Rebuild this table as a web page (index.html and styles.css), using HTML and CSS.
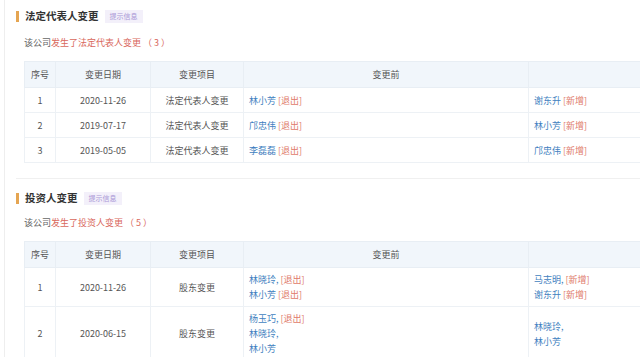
FILE: index.html
```html
<!DOCTYPE html>
<html lang="zh">
<head>
<meta charset="utf-8">
<link rel="stylesheet" href="styles.css">
</head>
<body>
<div class="page">
  <section class="section first">
    <div class="section-head">
      <span class="bar"></span>
      <h2 class="title">法定代表人变更</h2>
      <span class="badge">提示信息</span>
    </div>
    <p class="desc">该公司<span class="hl">发生了法定代表人变更<span class="cnt">（3）</span></span></p>
    <table class="tbl">
      <colgroup>
        <col class="c-no"><col class="c-date"><col class="c-item"><col class="c-before"><col class="c-after">
      </colgroup>
      <thead>
        <tr><th>序号</th><th>变更日期</th><th>变更项目</th><th>变更前</th><th class="last"></th></tr>
      </thead>
      <tbody>
        <tr><td>1</td><td>2020-11-26</td><td>法定代表人变更</td><td class="names"><span class="nm">林小芳</span> <span class="tag">[退出]</span></td><td class="names last"><span class="nm">谢东升</span> <span class="tag">[新增]</span></td></tr>
        <tr><td>2</td><td>2019-07-17</td><td>法定代表人变更</td><td class="names"><span class="nm">邝忠伟</span> <span class="tag">[退出]</span></td><td class="names last"><span class="nm">林小芳</span> <span class="tag">[新增]</span></td></tr>
        <tr><td>3</td><td>2019-05-05</td><td>法定代表人变更</td><td class="names"><span class="nm">李磊磊</span> <span class="tag">[退出]</span></td><td class="names last"><span class="nm">邝忠伟</span> <span class="tag">[新增]</span></td></tr>
      </tbody>
    </table>
  </section>
  <section class="section second">
    <div class="section-head">
      <span class="bar"></span>
      <h2 class="title">投资人变更</h2>
      <span class="badge">提示信息</span>
    </div>
    <p class="desc">该公司<span class="hl">发生了投资人变更<span class="cnt">（5）</span></span></p>
    <table class="tbl multi">
      <colgroup>
        <col class="c-no"><col class="c-date"><col class="c-item"><col class="c-before"><col class="c-after">
      </colgroup>
      <thead>
        <tr><th>序号</th><th>变更日期</th><th>变更项目</th><th>变更前</th><th class="last"></th></tr>
      </thead>
      <tbody>
        <tr><td>1</td><td>2020-11-26</td><td>股东变更</td>
          <td class="names"><div><span class="nm">林晓玲,</span> <span class="tag">[退出]</span></div><div><span class="nm">林小芳</span> <span class="tag">[退出]</span></div></td>
          <td class="names last"><div><span class="nm">马志明,</span> <span class="tag">[新增]</span></div><div><span class="nm">谢东升</span> <span class="tag">[新增]</span></div></td></tr>
        <tr><td>2</td><td>2020-06-15</td><td>股东变更</td>
          <td class="names"><div><span class="nm">杨玉巧,</span> <span class="tag">[退出]</span></div><div><span class="nm">林晓玲,</span></div><div><span class="nm">林小芳</span></div></td>
          <td class="names last"><div><span class="nm">林晓玲,</span></div><div><span class="nm">林小芳</span></div></td></tr>
      </tbody>
    </table>
  </section>
</div>
</body>
</html>
```
FILE: styles.css
```css
html, body {
  margin: 0;
  padding: 0;
  background: #ffffff;
  overflow: hidden;
}
body {
  font-family: "Noto Sans CJK SC", "Noto Sans", sans-serif;
  color: #555;
  width: 640px;
  height: 357px;
}
.page {
  margin-left: 4px;
  border-left: 1px solid #eeeeee;
  padding-left: 11px;
  height: 357px;
  box-sizing: border-box;
}
.section.first {
  padding-top: 9px;
  padding-bottom: 15px;
  border-bottom: 1px solid #f0f0f0;
}
.section.second {
  padding-top: 12px;
}
.section-head {
  display: flex;
  align-items: center;
  height: 14px;
}
.bar {
  width: 3px;
  height: 11px;
  background: #e5a552;
  margin-right: 6px;
}
.title {
  margin: 0;
  font-size: 10.5px;
  font-weight: 700;
  color: #333;
  line-height: 14px;
}
.badge {
  margin-left: 6px;
  font-size: 7px;
  line-height: 13px;
  height: 13px;
  padding: 0 5px;
  background: #f3f0fa;
  color: #a996d6;
}
.desc {
  margin: 14px 0 12px 8px;
  font-size: 9px;
  line-height: 12px;
  color: #666;
}
.second .desc {
  margin-top: 12px;
  margin-bottom: 12px;
}
.hl {
  color: #d9685c;
}
.cnt {
  letter-spacing: 2px;
  margin-left: 2px;
}
.tbl {
  margin-left: 8px;
  border-collapse: collapse;
  table-layout: fixed;
  width: 720px;
  font-size: 9px;
  color: #555;
}
.c-no { width: 31px; }
.c-date { width: 95px; }
.c-item { width: 93px; }
.c-before { width: 285px; }
.c-after { width: 216px; }
.tbl th {
  background: #f1f6fb;
  font-weight: 400;
  height: 25px;
  padding: 0;
  border: 1px solid #e8eef4;
  color: #555;
}
.tbl td {
  height: 24px;
  padding: 0;
  text-align: center;
  border: 1px solid #edf1f5;
  line-height: 15px;
}
.tbl td.names {
  text-align: left;
  padding-left: 5px;
}
.multi td {
  padding-top: 4px;
  padding-bottom: 4px;
  height: auto;
}
.multi td.names {
  padding-left: 5px;
}
.nm {
  color: #3f7fc0;
}
.tag {
  color: #e07a6a;
}
```
